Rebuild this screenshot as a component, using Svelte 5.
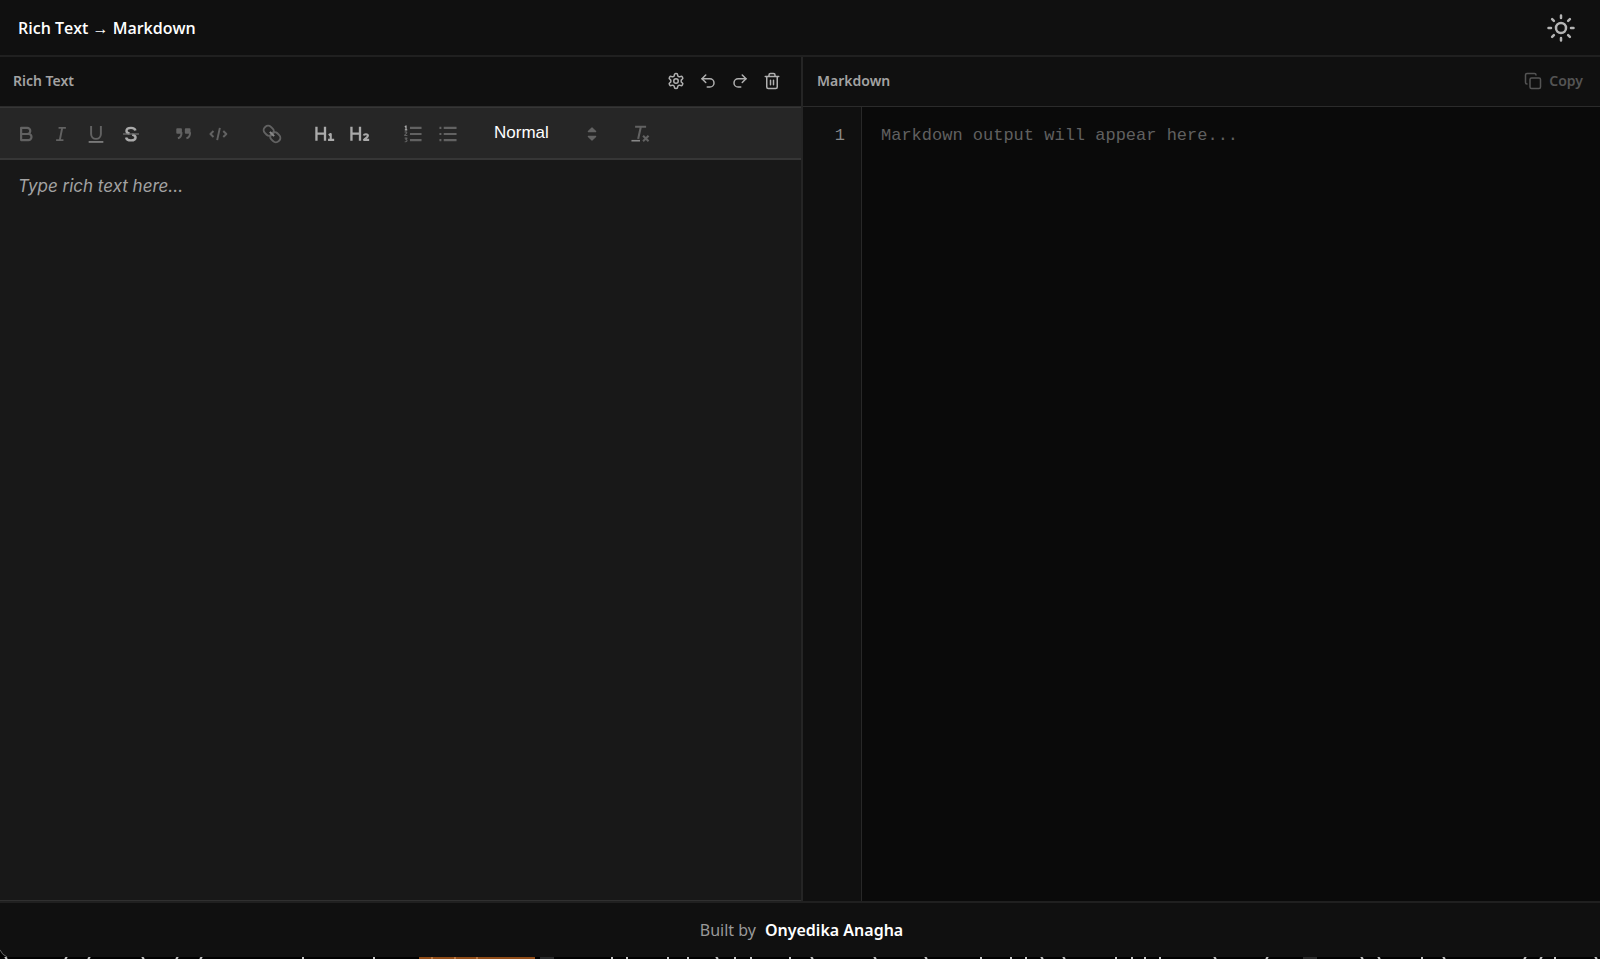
<script lang="ts">
	// Rich text editor on the left, generated Markdown on the right.

	type Tool = { label: string; paths: string; bright?: boolean };

	const groups: Tool[][] = [
		[
			{
				label: 'Bold',
				paths: '<path d="M5 4h5a2.500 2.500 0 0 1 0 5H5zM5 9h6a2.500 2.500 0 0 1 0 5H5z" stroke-width="1.800"/>'
			},
			{ label: 'Italic', paths: '<path d="M7 4h6M5 14h6M8 14l2-10"/>' },
			{
				label: 'Underline',
				paths:
					'<path d="M5 2.500V9a4 4 0 0 0 8 0V2.500"/><path d="M3 15.500h12" stroke="#909090" stroke-width="1.200"/>'
			},
			{
				label: 'Strike',
				bright: true,
				paths:
					'<path d="M12.600 6.200C12.300 4.700 10.800 4 9 4 6.800 4 5.300 4.900 5.300 6.500c0 1.200.9 1.800 2.500 2.100M10 9.500c1.800.4 2.700 1.100 2.700 2.300 0 1.500-1.400 2.400-3.700 2.400-2.200 0-3.700-.8-4-2.400" stroke-width="2"/><path d="M2.500 9h13" stroke="#777" stroke-width="1"/>'
			}
		],
		[
			{
				label: 'Blockquote',
				paths:
					'<path d="M3.500 5h3v3h-3zM10.500 5h3v3h-3z" fill="currentColor"/><path d="M7 7.500c0 3-1 4.500-3 5M14 7.500c0 3-1 4.500-3 5"/>'
			},
			{ label: 'Code block', paths: '<path d="M4.500 6.500 2 9l2.500 2.500M12.500 6.500 15 9l-2.500 2.500M9.700 4l-2.200 10"/>' }
		],
		[
			{
				label: 'Link',
				paths:
					'<g transform="rotate(45 9 9)"><rect x="1" y="5.500" width="8.500" height="7" rx="3.200"/><rect x="8.500" y="5.500" width="8.500" height="7" rx="3.200"/><path d="M6.500 9h5" stroke="#888"/></g>'
			}
		],
		[
			{
				label: 'Heading 1',
				bright: true,
				paths:
					'<path d="M2 3v11.500M9 3v11.500M2 8.700h7" stroke-width="1.900"/><path d="M12 10l1.700-1v5M11.500 13.800h5" stroke-width="1.700"/>'
			},
			{
				label: 'Heading 2',
				bright: true,
				paths:
					'<path d="M2 3v11.500M9 3v11.500M2 8.700h7" stroke-width="1.900"/><path d="M12 10.200c.4-1.400 3.500-1.500 3.500.3 0 1.200-1.800 1.800-3.300 3.300h4.300" stroke-width="1.700"/>'
			}
		],
		[
			{
				label: 'Numbered list',
				paths:
					'<path d="M6.500 4H16M6.500 9H16M6.500 14H16" stroke-width="1.800"/><path d="M2.300 3.200l1-.8v3.200M2.300 5.600h2" stroke="#aaa" stroke-width="1"/><path d="M2.200 7.700c.5-.8 1.800-.5 1.700.3 0 .7-1.700 1.200-1.700 2.200h2.200M2.200 12.400h1.900l-1 1.200c1.500 0 1.400 2-.9 1.700" stroke-width=".9"/>'
			},
			{
				label: 'Bullet list',
				paths:
					'<path d="M5.500 4H16M5.500 9H16M5.500 14H16M2 4h1.600M2 9h1.600M2 14h1.600" stroke-width="1.800"/>'
			}
		]
	];

	const actions = [
		{
			label: 'Settings',
			paths:
				'<path d="M12.220 2h-.440a2 2 0 0 0-2 2v.180a2 2 0 0 1-1 1.730l-.430.250a2 2 0 0 1-2 0l-.150-.080a2 2 0 0 0-2.730.730l-.220.380a2 2 0 0 0 .730 2.730l.150.100a2 2 0 0 1 1 1.720v.510a2 2 0 0 1-1 1.740l-.150.090a2 2 0 0 0-.730 2.730l.220.380a2 2 0 0 0 2.730.730l.150-.080a2 2 0 0 1 2 0l.430.250a2 2 0 0 1 1 1.730V20a2 2 0 0 0 2 2h.440a2 2 0 0 0 2-2v-.180a2 2 0 0 1 1-1.730l.430-.250a2 2 0 0 1 2 0l.150.080a2 2 0 0 0 2.730-.730l.220-.390a2 2 0 0 0-.730-2.730l-.150-.080a2 2 0 0 1-1-1.740v-.500a2 2 0 0 1 1-1.740l.150-.090a2 2 0 0 0 .730-2.730l-.220-.380a2 2 0 0 0-2.730-.730l-.150.080a2 2 0 0 1-2 0l-.430-.250a2 2 0 0 1-1-1.730V4a2 2 0 0 0-2-2z"/><circle cx="12" cy="12" r="3"/>'
		},
		{ label: 'Undo', paths: '<path d="M9 14 4 9l5-5"/><path d="M4 9h10.500a5.500 5.500 0 0 1 0 11H11"/>' },
		{ label: 'Redo', paths: '<path d="m15 14 5-5-5-5"/><path d="M20 9H9.500a5.500 5.500 0 0 0 0 11H13"/>' },
		{
			label: 'Clear',
			paths:
				'<path d="M3 6h18M5 6v14a2 2 0 0 0 2 2h10a2 2 0 0 0 2-2V6M8 6V4c0-1 1-2 2-2h4c1 0 2 1 2 2v2M10 11v6M14 11v6"/>'
		}
	];

	// Sliver of the terminal that shows under the window: x and lean of each stroke.
	const strokes: [number, number][] = [
		[5, 2], [67, -2], [90, -2], [142, 2], [178, -2], [202, -2], [303, 0], [374, 0],
		[612, 0], [627, 0], [668, 0], [688, 0], [716, 2], [735, 0], [751, 0],
		[790, 0], [811, 2], [874, 2], [925, 2], [981, 0], [1011, 0], [1026, 0], [1041, 2],
		[1063, 2], [1116, 0], [1132, 0], [1145, 0], [1160, 0], [1214, 2], [1268, -2],
		[1361, 2], [1378, 2], [1422, 0], [1443, 2], [1526, -2], [1542, -2], [1555, 0], [1595, 2]
	];

	let format = $state('Normal');
	let richText = $state('');
	let markdown = $derived(richText);
</script>

<div class="app">
	<header class="topbar">
		<h1>Rich Text → Markdown</h1>
		<button type="button" class="theme" aria-label="Toggle theme">
			<svg viewBox="0 0 24 24" width="30" height="30" aria-hidden="true">
				<circle cx="12" cy="12" r="4" />
				<path d="M12 2v2M12 20v2M4.900 4.900l1.400 1.400M17.700 17.700l1.400 1.400M2 12h2M20 12h2M6.300 17.700l-1.400 1.400M19.100 4.900l-1.400 1.400" />
			</svg>
		</button>
	</header>

	<main>
		<section class="pane rich">
			<div class="pane-head">
				<h2><label for="rich">Rich Text</label></h2>
				<div class="actions">
					{#each actions as a}
						<button type="button" aria-label={a.label}>
							<svg viewBox="0 0 24 24" width="18" height="18" aria-hidden="true">{@html a.paths}</svg>
						</button>
					{/each}
				</div>
			</div>
			<div class="toolbar" role="toolbar" aria-label="Formatting">
				{#each groups as group}
					<div class="group">
						{#each group as t}
							<button type="button" class:bright={t.bright} aria-label={t.label}>
								<svg viewBox="0 0 18 18" width="22" height="22" aria-hidden="true">{@html t.paths}</svg>
							</button>
						{/each}
					</div>
				{/each}
				<div class="picker">
					<select bind:value={format} aria-label="Text style">
						<option>Normal</option>
						<option>Heading 1</option>
						<option>Heading 2</option>
					</select>
					<svg viewBox="0 0 18 18" width="22" height="22" aria-hidden="true">
						<path d="M6 7l3-3 3 3zM6 11l3 3 3-3z" />
					</svg>
				</div>
				<button type="button" aria-label="Remove formatting">
					<svg viewBox="0 0 18 18" width="22" height="22" aria-hidden="true">
						<path d="M5 3h9M9.700 3 7.500 13" stroke-width="1.700" />
						<path d="M2 14.500h7" stroke="#888" stroke-width="1.300" />
						<path d="m11.500 10.500 4.500 4.500M16 10.500 11.500 15" stroke-width="1.700" />
					</svg>
				</button>
			</div>
			<textarea id="rich" class="editor" bind:value={richText} placeholder="Type rich text here..."></textarea>
		</section>

		<section class="pane markdown">
			<div class="pane-head">
				<h2><label for="markdown">Markdown</label></h2>
				<button type="button" class="copy" disabled={!markdown}>
					<svg viewBox="0 0 24 24" width="18" height="18" aria-hidden="true">
						<rect x="8" y="8" width="14" height="14" rx="2" />
						<path d="M4 16a2 2 0 0 1-2-2V4a2 2 0 0 1 2-2h10a2 2 0 0 1 2 2" />
					</svg>
					Copy
				</button>
			</div>
			<div class="output">
				<div class="gutter">1</div>
				<textarea id="markdown" readonly value={markdown} placeholder="Markdown output will appear here..."></textarea>
			</div>
		</section>
	</main>

	<footer>
		<span>Built by</span>
		<a href="#author">Onyedika Anagha</a>
		<svg class="corner" viewBox="0 0 8 8" width="8" height="8" aria-hidden="true">
			<path d="M0 0v8h8Q2 7 0 0" fill="#000" stroke="none" />
			<path d="M0 1q2 5 7 7" stroke="#666" stroke-width="1" />
		</svg>
	</footer>

	<svg class="sliver" viewBox="0 0 1600 2" preserveAspectRatio="none" aria-hidden="true">
		<rect x="419" width="116" height="2" fill="#914c17" stroke="none" />
		<path d="M432 0v2M455 0v2M477 0v2" stroke="#b9753d" stroke-width="2" />
		<path d="M540 1h14M1303 1h14" stroke="#555" stroke-width="1" />
		{#each strokes as [x, lean]}
			<path d="M{x} 0l{lean} 2" stroke="#c8c8c8" stroke-width="2" />
		{/each}
	</svg>
</div>

<style>
	:global(body) {
		margin: 0;
		background: #000;
	}

	.app {
		display: flex;
		flex-direction: column;
		height: 100vh;
		background: #101010;
		color: #fff;
		font-family: 'Noto Sans', 'Open Sans', sans-serif;
	}

	svg {
		display: block;
		fill: none;
		stroke: currentColor;
		stroke-width: 2;
		stroke-linecap: round;
		stroke-linejoin: round;
	}

	button {
		display: flex;
		align-items: center;
		justify-content: center;
		padding: 0;
		border: 0;
		background: none;
		color: inherit;
		font: inherit;
		cursor: pointer;
	}

	.topbar {
		display: flex;
		align-items: center;
		justify-content: space-between;
		box-sizing: border-box;
		height: 57px;
		padding: 0 24px 0 18px;
		border-bottom: 2px solid #202020;
	}

	h1 {
		margin: 0;
		font-family: 'Open Sans', 'Noto Sans', sans-serif;
		font-size: 16px;
		font-weight: 600;
	}

	.theme {
		color: #b5b5b5;
	}

	main {
		display: grid;
		grid-template-columns: 803fr 797fr;
		flex: 1;
		min-height: 0;
	}

	.pane {
		display: flex;
		flex-direction: column;
		min-width: 0;
		min-height: 0;
	}

	.rich {
		border-right: 2px solid #252525;
	}

	.pane-head {
		display: flex;
		align-items: center;
		justify-content: space-between;
		box-sizing: border-box;
		height: 50px;
		padding: 0 20px 2px 13px;
		border-bottom: 1px solid #2b2b2b;
	}

	h2 {
		margin: 0;
		font-size: 14px;
		font-weight: 600;
		color: #a3a3a3;
	}

	.actions {
		display: flex;
		gap: 14px;
		color: #b0b0b0;
	}

	.toolbar {
		display: flex;
		align-items: center;
		box-sizing: border-box;
		height: 53px;
		padding: 2px 8px 0;
		border-top: 1px solid #363636;
		border-bottom: 2px solid #363636;
		background: #262626;
		color: #626262;
	}

	.toolbar svg {
		stroke-linecap: butt;
		stroke-width: 1.6;
	}

	.toolbar button {
		width: 35px;
		height: 30px;
	}

	.toolbar .bright {
		color: #aaa;
	}

	.group {
		display: flex;
		margin-right: 18px;
	}

	.picker {
		position: relative;
		width: 128px;
		margin-right: 11px;
	}

	.picker select {
		width: 100%;
		height: 30px;
		padding: 0 0 3px 11px;
		appearance: none;
		border: 0;
		background: none;
		color: #fff;
		font-family: 'Liberation Sans', Arial, sans-serif;
		font-size: 17px;
		font-weight: 500;
	}

	.picker svg {
		position: absolute;
		top: 4px;
		right: 8px;
		fill: currentColor;
		stroke-width: 1;
		pointer-events: none;
	}

	textarea {
		display: block;
		box-sizing: border-box;
		flex: 1;
		width: 100%;
		border: 0;
		outline: 0;
		resize: none;
		background: transparent;
		color: #eee;
	}

	.editor {
		padding: 14px 18px;
		border-bottom: 1px solid #303030;
		background: #181818;
		font: 17px/25px Inter, 'Liberation Sans', sans-serif;
	}

	.editor::placeholder {
		color: #a3a3a3;
		font-style: italic;
	}

	.markdown .pane-head {
		padding: 0 17px 2px 14px;
	}

	.copy {
		gap: 7px;
		color: #545454;
		font-size: 14px;
		font-weight: 600;
	}

	.output {
		display: flex;
		flex: 1;
		min-height: 0;
		background: #0a0a0a;
		font: 17px/28px 'Liberation Mono', monospace;
	}

	.gutter {
		box-sizing: border-box;
		width: 59px;
		padding: 15px 16px;
		border-right: 1px solid #282828;
		background: #101010;
		color: #888;
		text-align: right;
	}

	.output textarea {
		padding: 15px 19px;
		font: inherit;
	}

	.output textarea::placeholder {
		color: #606060;
	}

	footer {
		position: relative;
		display: flex;
		align-items: center;
		justify-content: center;
		gap: 9px;
		box-sizing: border-box;
		height: 56px;
		padding-left: 3px;
		border-top: 2px solid #202020;
		color: #999;
		font-size: 16px;
	}

	footer a {
		color: #fff;
		font-weight: 600;
		text-decoration: none;
	}

	.corner {
		position: absolute;
		bottom: 0;
		left: 0;
	}

	.sliver {
		width: 100%;
		height: 2px;
		background: #000;
		stroke-linecap: butt;
	}
</style>
